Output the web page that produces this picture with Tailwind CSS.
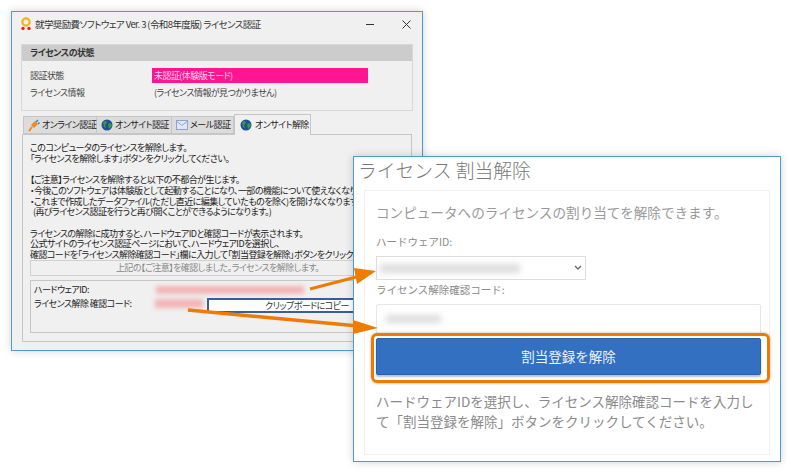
<!DOCTYPE html>
<html lang="ja">
<head>
  <meta charset="UTF-8">
  <title>ライセンス認証</title>
  <script src="https://cdn.jsdelivr.net/npm/@tailwindcss/browser@4"></script>
</head>
<body class="bg-white font-['Noto_Sans_CJK_JP','Noto_Sans',sans-serif]">
  <div class="relative w-[788px] h-[470px] overflow-hidden bg-white">

    <!-- license window -->
    <div class="absolute left-[11px] top-[11px] w-[412px] h-[340px] border border-[#4a9bd6] bg-[#f0f0f0] shadow-[0_0_8px_rgba(0,0,0,0.18)] flex flex-col text-[#222] text-[9px] tracking-[-0.55px] [font-feature-settings:'palt'] overflow-hidden">
      <div class="flex items-center h-[24px] pl-[8px] shrink-0">
        <svg width="12" height="14" viewBox="0 0 12 14" class="mr-[3px] shrink-0">
          <circle cx="6" cy="5" r="3.600" fill="none" stroke="#f2b21c" stroke-width="2.200"/>
          <circle cx="3" cy="11.400" r="1.700" fill="#d9241c"/>
          <circle cx="9" cy="11.400" r="1.700" fill="#d9241c"/>
        </svg>
        <span class="text-[9.5px] tracking-[-0.6px] text-[#333] whitespace-nowrap">就学奨励費ソフトウェア Ver. 3 (令和8年度版) ライセンス認証</span>
        <div class="ml-auto flex items-center gap-[28px] pr-[11px]">
          <div class="w-[8px] h-px bg-[#333] mt-px"></div>
          <svg width="9" height="9" viewBox="0 0 9 9"><path d="M.5.5l8 8M8.500.5l-8 8" stroke="#333" stroke-width="1"/></svg>
        </div>
      </div>

      <!-- status group -->
      <div class="mt-[8px] mx-[9px] h-[67px] border border-[#d8d8d8] shrink-0">
        <div class="h-[16px] bg-[#cccccc] pl-[8px] flex items-center font-bold text-[#333]">ライセンスの状態</div>
        <div class="grid grid-cols-[122px_216px] pl-[8px] pt-[7px] gap-y-[2px] text-[#444]">
          <div class="h-[15px] flex items-center">認証状態</div>
          <div class="h-[15px] bg-[#ff1493] text-[#ffd6ec] pl-[2px] flex items-center">未認証(体験版モード)</div>
          <div class="h-[16px] flex items-center">ライセンス情報</div>
          <div class="h-[16px] flex items-center pl-[2px]">(ライセンス情報が見つかりません)</div>
        </div>
      </div>

      <!-- tabs -->
      <div class="flex items-end mt-[3px] ml-[11px] h-[20px] shrink-0 relative z-10 whitespace-nowrap">
        <div class="h-[18px] w-[74px] flex items-center gap-[2px] pl-[4px] bg-[#dcdcdc] border border-[#c6c6c6]">
          <svg width="12" height="13" viewBox="0 0 12 13" class="shrink-0"><path d="M1 12l3-4" stroke="#f08a24" stroke-width="2"/><path d="M3 6l4-4 3 3-4 4z" fill="#f08a24"/><path d="M8 3l2-2M10 5l1.500-1.500" stroke="#4a78b8" stroke-width="1.500"/></svg>
          <span>オンライン認証</span>
        </div>
        <div class="h-[18px] w-[75px] flex items-center gap-[2px] pl-[4px] bg-[#dcdcdc] border border-l-0 border-[#c6c6c6]">
          <svg width="12" height="12" viewBox="0 0 12 12" class="shrink-0"><circle cx="6" cy="6" r="5.500" fill="#1d4f9c"/><path d="M2 3l3-1 1 2-2 2 1 3-2-1zM7 5l3-1 1 3-3 3z" fill="#3f9a3c"/></svg>
          <span>オンサイト認証</span>
        </div>
        <div class="h-[18px] w-[62px] flex items-center gap-[2px] pl-[4px] bg-[#dcdcdc] border border-l-0 border-[#c6c6c6]">
          <svg width="12" height="10" viewBox="0 0 12 10" class="shrink-0"><rect x=".5" y=".5" width="11" height="9" fill="#dfe6f5" stroke="#8ea4cf"/><path d="M.5 1l5.500 4.500L11.500 1" fill="none" stroke="#8ea4cf"/></svg>
          <span>メール認証</span>
        </div>
        <div class="h-[21px] w-[77px] flex items-center gap-[3px] pl-[5px] bg-[#f0f0f0] border border-b-0 border-[#c6c6c6] relative top-px">
          <svg width="12" height="12" viewBox="0 0 12 12" class="shrink-0"><circle cx="6" cy="6" r="5.500" fill="#1d4f9c"/><path d="M2 3l3-1 1 2-2 2 1 3-2-1zM7 5l3-1 1 3-3 3z" fill="#3f9a3c"/></svg>
          <span>オンサイト解除</span>
        </div>
      </div>

      <!-- tab panel -->
      <div class="mx-[10px] h-[208px] border border-[#c6c6c6] px-[7px] pt-[8px] shrink-0 flex flex-col">
        <div class="leading-[10.7px] whitespace-nowrap h-[117px]">
          <p>このコンピュータのライセンスを解除します。</p>
          <p>「ライセンスを解除します」ボタンをクリックしてください。</p>
          <p class="mt-[10.700px]">【ご注意】ライセンスを解除すると以下の不都合が生じます。</p>
          <p>・今後このソフトウェアは体験版として起動することになり、一部の機能について使えなくなります。</p>
          <p>・これまで作成したデータファイル(ただし直近に編集していたものを除く)を開けなくなります。</p>
          <p>&nbsp;&nbsp;(再びライセンス認証を行うと再び開くことができるようになります。)</p>
          <p class="mt-[10.700px]">ライセンスの解除に成功すると、ハードウェアIDと確認コードが表示されます。</p>
          <p>公式サイトのライセンス認証ページにおいて、ハードウェアIDを選択し、</p>
          <p>確認コードを「ライセンス解除確認コード」欄に入力して「割当登録を解除」ボタンをクリックしてください。</p>
        </div>
        <div class="h-[16px] w-[375px] border border-[#d0d0d0] text-[#888] flex items-center justify-center shrink-0 whitespace-nowrap">上記の【ご注意】を確認しました。ライセンスを解除します。</div>
        <div class="mt-[4px] h-[53px] w-[375px] border border-[#c6c6c6] shrink-0 pl-[3px] pt-[2px] grid grid-cols-[122px_1fr] grid-rows-[13px_17px] gap-y-[1px] whitespace-nowrap">
          <div class="flex items-center">ハードウェアID:</div>
          <div class="flex items-center"><div class="w-[148px] h-[8px] bg-[#f3b5b5] blur-[2px]"></div></div>
          <div class="h-[13px] flex items-center">ライセンス解除 確認コード:</div>
          <div class="flex items-start">
            <div class="w-[48px] h-[9px] mt-[2px] -ml-[1px] bg-[#f3b5b5] blur-[2px] shrink-0"></div>
            <div class="mt-[1px] ml-[4px] w-[200px] h-[15px] bg-white border-2 border-[#3a5f96] text-[#333] flex items-center justify-center shrink-0">クリップボードにコピー</div>
          </div>
        </div>
      </div>
    </div>

    <!-- web page window -->
    <div class="absolute left-[353px] top-[156px] w-[428px] h-[306px] border border-[#4a9bd6] bg-white shadow-[0_0_8px_rgba(0,0,0,0.18)] flex flex-col">
      <h1 class="h-[27px] pl-[4px] text-[18.800px] leading-[26px] font-light text-[#777] shrink-0 whitespace-nowrap">ライセンス 割当解除</h1>
      <div class="mx-[10px] mt-[6px] h-[265px] border border-[#f0f0f0] px-[11px] pt-[9px] shrink-0 flex flex-col">
        <p class="text-[13.600px] leading-[24px] text-[#999] h-[24px] whitespace-nowrap">コンピュータへのライセンスの割り当てを解除できます。</p>
        <label class="mt-[10px] text-[10.500px] leading-[16px] text-[#8a8a8a] h-[16px]">ハードウェアID:</label>
        <div class="mt-[6px] w-[210px] h-[24px] border border-[#ddd] flex items-center px-[3px] shrink-0">
          <div class="w-[140px] h-[9px] bg-[#dcdcdc] blur-[3px]"></div>
          <svg width="8" height="6" viewBox="0 0 8 6" class="ml-auto"><path d="M1 1l3 3 3-3" fill="none" stroke="#666" stroke-width="1.300"/></svg>
        </div>
        <label class="mt-[2px] text-[10.500px] leading-[16px] text-[#8a8a8a] h-[16px] whitespace-nowrap">ライセンス解除確認コード:</label>
        <div class="mt-[6px] w-[385px] h-[30px] border border-[#e6e6e6] rounded-[2px] flex items-center pl-[9px] shrink-0">
          <div class="w-[55px] h-[8px] bg-[#dcdcdc] blur-[3px]"></div>
        </div>
        <div class="relative mt-[4px] w-[385px] h-[37px] shrink-0">
          <button class="w-full h-full bg-[#3470c2] border border-[#2c5fa6] rounded-[2px] text-[#eef3fb] text-[13.500px] shadow-[0_2px_2px_rgba(50,100,180,0.4)]">割当登録を解除</button>
          <div class="absolute -left-[5px] -right-[9px] -top-[5px] -bottom-[8px] border-[3px] border-[#f07a00] rounded-[6px] shadow-[0_0_3px_rgba(0,0,0,0.3)]"></div>
        </div>
        <p class="mt-[16px] w-[380px] text-[13.500px] leading-[20px] text-[#8a8a8a]">ハードウェアIDを選択し、ライセンス解除確認コードを入力して「割当登録を解除」ボタンをクリックしてください。</p>
      </div>
    </div>

    <!-- arrows between the two windows -->
    <svg class="absolute left-0 top-0" width="788" height="470" viewBox="0 0 788 470">
      <path d="M310 289L360 276" stroke="#ef7b00" stroke-width="3"/>
      <path d="M376 271L354 268L357 284Z" fill="#ef7b00"/>
      <path d="M188 310L358 326" stroke="#ef7b00" stroke-width="3.500"/>
      <path d="M378 328L353 320L353 334Z" fill="#ef7b00"/>
    </svg>
  </div>
</body>
</html>
